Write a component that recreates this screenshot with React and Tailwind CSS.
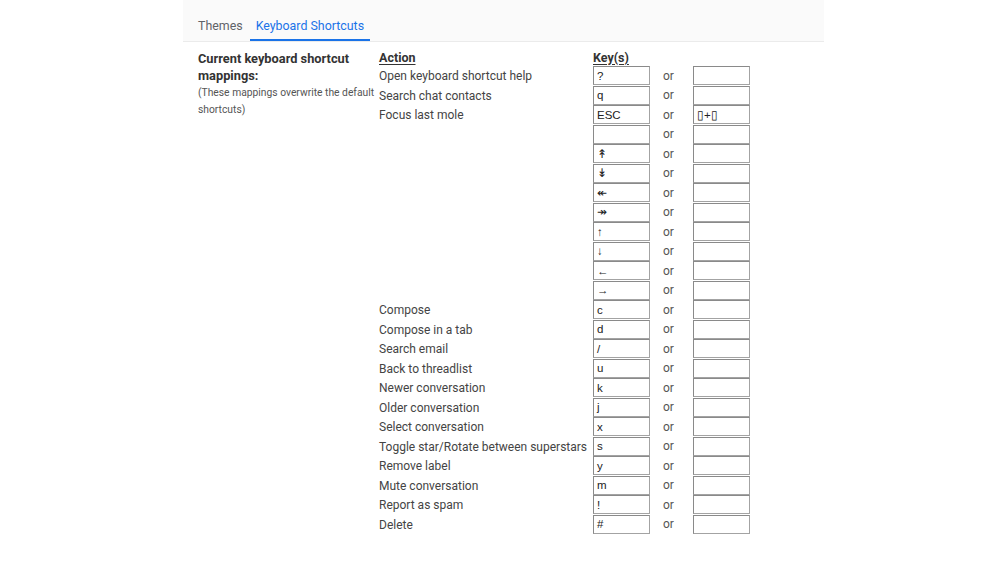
import React from 'react';

const rows = [
  { action: 'Open keyboard shortcut help', key: '?', alt: '' },
  { action: 'Search chat contacts', key: 'q', alt: '' },
  { action: 'Focus last mole', key: 'ESC', alt: '▯+▯' },
  { action: '', key: '', alt: '' },
  { action: '', key: '↟', alt: '' },
  { action: '', key: '↡', alt: '' },
  { action: '', key: '↞', alt: '' },
  { action: '', key: '↠', alt: '' },
  { action: '', key: '↑', alt: '' },
  { action: '', key: '↓', alt: '' },
  { action: '', key: '←', alt: '' },
  { action: '', key: '→', alt: '' },
  { action: 'Compose', key: 'c', alt: '' },
  { action: 'Compose in a tab', key: 'd', alt: '' },
  { action: 'Search email', key: '/', alt: '' },
  { action: 'Back to threadlist', key: 'u', alt: '' },
  { action: 'Newer conversation', key: 'k', alt: '' },
  { action: 'Older conversation', key: 'j', alt: '' },
  { action: 'Select conversation', key: 'x', alt: '' },
  { action: 'Toggle star/Rotate between superstars', key: 's', alt: '' },
  { action: 'Remove label', key: 'y', alt: '' },
  { action: 'Mute conversation', key: 'm', alt: '' },
  { action: 'Report as spam', key: '!', alt: '' },
  { action: 'Delete', key: '#', alt: '' },
];

const KeyBox = ({ value }) => (
  <div className="w-[57px] h-[19px] border border-[#a3a3a3] border-t-[#8a8a8a] border-l-[#8a8a8a] bg-white pl-[3px] pt-px flex items-center text-[11.5px] text-[#222] font-['Liberation_Sans',Arial,sans-serif] overflow-hidden whitespace-nowrap">
    {value}
  </div>
);

const App = () => {
  return (
    <div className="min-h-screen bg-white font-['Roboto',Arial,sans-serif]">
      <div className="ml-[183px] w-[641px]">
        <div className="h-[42px] bg-[#fafafa] border-b border-[#ebebeb] flex items-end pl-[9px]">
          <div className="px-[6px] h-[41px] flex items-end pb-[5px] text-[12.4px] text-[#5f6368]">Themes</div>
          <div className="ml-px px-[6px] h-[41px] flex items-end pb-[3px] text-[12.4px] text-[#1a73e8] border-b-2 border-[#1a73e8]">
            Keyboard Shortcuts
          </div>
        </div>

        <div className="flex pl-[15px] pt-[8px]">
          <div className="w-[181px] shrink-0">
            <div className="text-[12.8px] leading-[17px] font-bold text-[#333] w-[170px]">
              Current keyboard shortcut mappings:
            </div>
            <div className="text-[10.3px] leading-[17px] text-[#555]">
              (These mappings overwrite the default shortcuts)
            </div>
          </div>

          <div className="flex flex-col">
            <div className="flex h-[16px] items-center">
              <div className="w-[214px] text-[12.5px] font-bold text-[#333] underline underline-offset-2">Action</div>
              <div className="text-[12.5px] font-bold text-[#333] underline underline-offset-2">Key(s)</div>
            </div>
            {rows.map((r, i) => (
              <div key={i} className="flex h-[19.5px] items-center">
                <div className="w-[214px] pt-px text-[12px] text-[#444] whitespace-nowrap">{r.action}</div>
                <KeyBox value={r.key} />
                <div className="w-[43px] pl-[13px] text-[12px] text-[#555]">or</div>
                <KeyBox value={r.alt} />
              </div>
            ))}
          </div>
        </div>
      </div>
    </div>
  );
};

export default App;
